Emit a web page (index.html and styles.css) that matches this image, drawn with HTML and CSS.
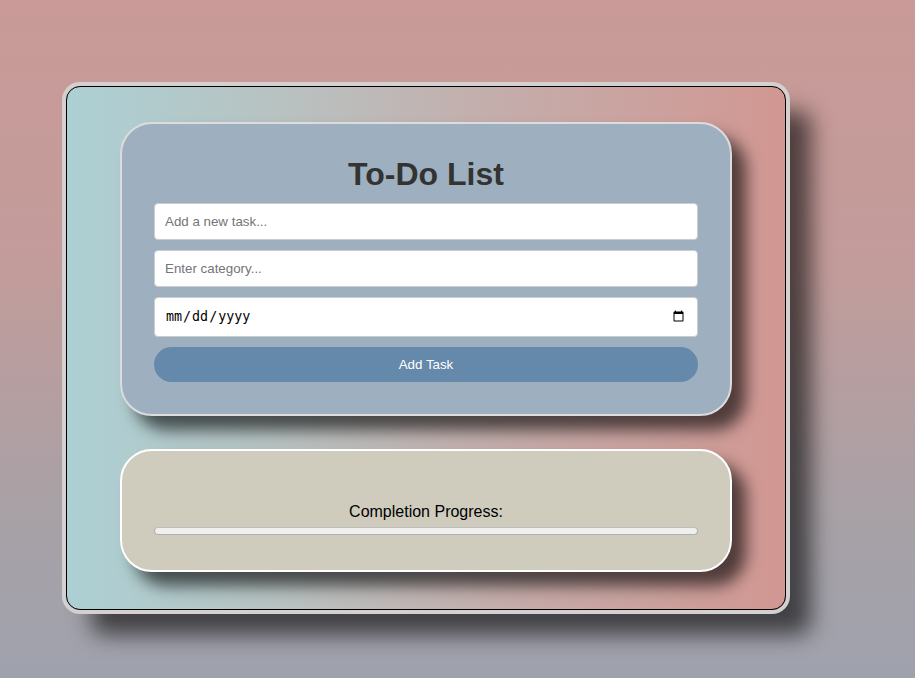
FILE: index.html
```html
<!DOCTYPE html>
<html lang="en">
<head>
<meta charset="utf-8">
<title>To-Do List</title>
<link rel="stylesheet" href="styles.css">
</head>
<body>
  <div class="app">
    <section class="card form-card">
      <h1 class="title">To-Do List</h1>
      <input class="field" type="text" placeholder="Add a new task...">
      <input class="field" type="text" placeholder="Enter category...">
      <input class="field date-field" type="date">
      <button class="add-btn" type="button">Add Task</button>
    </section>
    <section class="card progress-card">
      <ul class="task-list"></ul>
      <p class="progress-label">Completion Progress:</p>
      <div class="progress-track"><div class="progress-fill"></div></div>
    </section>
  </div>
</body>
</html>
```
FILE: styles.css
```css
* { box-sizing: border-box; }

html, body { height: 100%; }

body {
  margin: 0;
  min-height: 678px;
  background: linear-gradient(to bottom, #c99a97 0%, #c29c9b 40%, #a8a1a6 75%, #9fa2ad 100%);
  font-family: "Liberation Sans", Arial, sans-serif;
  padding: 86px 0 0 66px;
}

.app {
  width: 720px;
  height: 524px;
  border: 1px solid #000;
  border-radius: 14px;
  background: linear-gradient(to right, #acd0d4 0%, #b8c2c1 30%, #c4adab 60%, #d29792 100%);
  box-shadow: 0 0 0 4px #d3d0cf, 25px 25px 22px rgba(0, 0, 0, 0.6);
  display: flex;
  flex-direction: column;
  align-items: center;
  padding-top: 35px;
  gap: 33px;
}

.card {
  width: 612px;
  border-radius: 32px;
  padding: 32px;
  box-shadow: 14px 14px 16px rgba(0, 0, 0, 0.62);
}

.form-card {
  background: #9eb0c0;
  border: 2px solid #dcdcdc;
  display: flex;
  flex-direction: column;
  gap: 10px;
}

.title {
  margin: 0;
  font-size: 32px;
  line-height: 37px;
  font-weight: bold;
  color: #333;
  text-align: center;
}

.field {
  display: block;
  width: 100%;
  height: 37px;
  padding: 0 10px;
  border: 1px solid #ccc;
  border-radius: 4px;
  background: #fff;
  font-family: "Liberation Sans", Arial, sans-serif;
  font-size: 13.333px;
  color: #000;
  outline: none;
}

.field::placeholder { color: #757575; }

.date-field {
  height: 40px;
  font-family: "DejaVu Sans Mono", monospace;
  font-size: 13.333px;
}

.add-btn {
  height: 35px;
  width: 100%;
  border: none;
  border-radius: 18px;
  background: #6589aa;
  color: #fff;
  font-family: "Liberation Sans", Arial, sans-serif;
  font-size: 13.333px;
  cursor: pointer;
}

.progress-card {
  background: #cfccbe;
  border: 2px solid #fff;
  padding-bottom: 35px;
}

.task-list {
  margin: 0;
  padding: 0;
  height: 20px;
  list-style: none;
}

.progress-label {
  margin: 0;
  font-size: 16px;
  line-height: 18px;
  color: #000;
  text-align: center;
}

.progress-track {
  margin-top: 6px;
  height: 8px;
  border: 1px solid #b0b0b0;
  border-top-color: #bdbdbd;
  border-radius: 4px;
  background: #efefef;
  overflow: hidden;
}

.progress-fill {
  width: 0;
  height: 100%;
  background: #6589aa;
}
```
